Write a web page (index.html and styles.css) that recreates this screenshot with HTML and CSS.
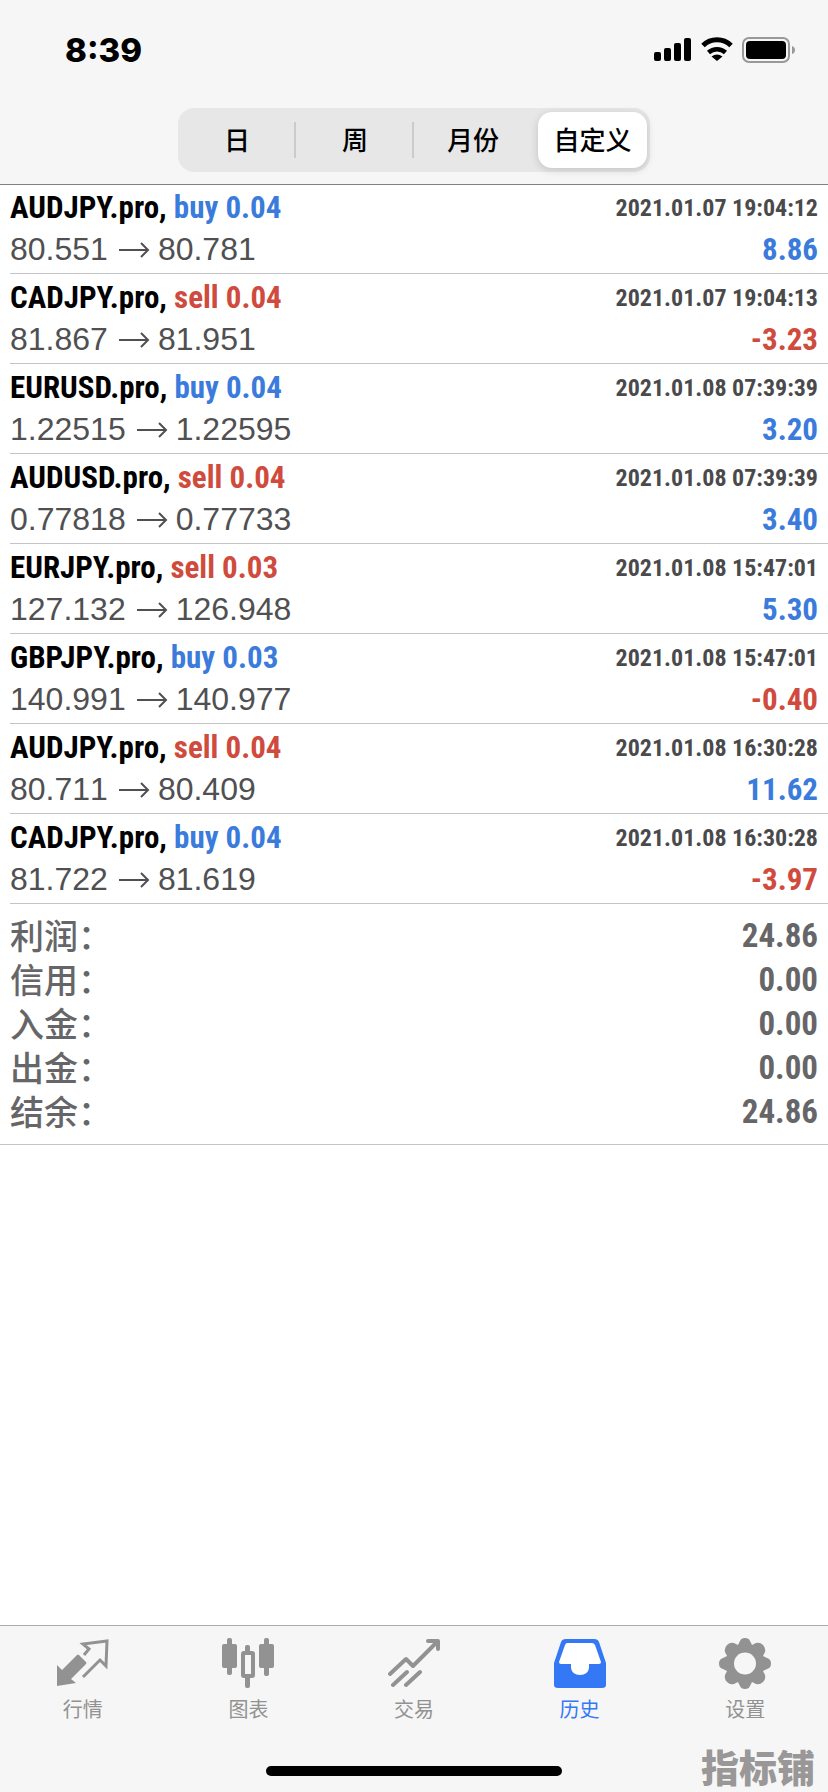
FILE: index.html
```html
<!DOCTYPE html>
<html lang="zh-CN">
<head>
<meta charset="utf-8">
<meta name="viewport" content="width=device-width, initial-scale=1">
<title>历史</title>
<link rel="stylesheet" href="styles.css">
</head>
<body>
<svg class="defs" width="0" height="0" aria-hidden="true">
  <symbol id="arrow" viewBox="0 0 32 20"><path d="M1 10H30M23 3L30 10L23 17" fill="none" stroke="currentColor" stroke-width="2"/></symbol>
</svg>
<header class="top">
  <div class="status">
    <time class="clock">8:39</time>
    <div class="status-icons">
      <svg width="38" height="26" viewBox="0 0 38 26" aria-hidden="true"><rect x="0" y="15" width="7" height="9" rx="2"/><rect x="10" y="11" width="7" height="13" rx="2"/><rect x="20" y="6" width="7" height="18" rx="2"/><rect x="30" y="1" width="7" height="23" rx="2"/></svg>
      <svg width="32" height="26" viewBox="0 0 32 26" aria-hidden="true"><path d="M2 8.500A20 20 0 0 1 30 8.500" fill="none" stroke="#000" stroke-width="5"/><path d="M7.500 15.500A12.500 12.500 0 0 1 24.500 15.500" fill="none" stroke="#000" stroke-width="4.500"/><path d="M16 24L10.500 19.500Q16 15.500 21.500 19.500Z"/></svg>
      <svg width="54" height="26" viewBox="0 0 54 26" aria-hidden="true"><rect x="1" y="1" width="46" height="24" rx="6" fill="none" stroke="#999" stroke-width="2"/><rect x="4" y="4" width="40" height="18" rx="4"/><path d="M50 9Q53 10 53 13Q53 16 50 17Z" fill="#999"/></svg>
    </div>
  </div>
  <div class="segments">
    <button type="button">日</button>
    <button type="button">周</button>
    <button type="button">月份</button>
    <button type="button" class="active" aria-pressed="true">自定义</button>
  </div>
</header>
<main>
  <ul class="deals">
    <li><div class="deal"><b>AUDJPY.pro, <span class="pos">buy 0.04</span></b><span class="price">80.551<svg class="arrow"><use href="#arrow"/></svg>80.781</span></div><div class="result"><time>2021.01.07 19:04:12</time><b class="pos">8.86</b></div></li>
    <li><div class="deal"><b>CADJPY.pro, <span class="neg">sell 0.04</span></b><span class="price">81.867<svg class="arrow"><use href="#arrow"/></svg>81.951</span></div><div class="result"><time>2021.01.07 19:04:13</time><b class="neg">-3.23</b></div></li>
    <li><div class="deal"><b>EURUSD.pro, <span class="pos">buy 0.04</span></b><span class="price">1.22515<svg class="arrow"><use href="#arrow"/></svg>1.22595</span></div><div class="result"><time>2021.01.08 07:39:39</time><b class="pos">3.20</b></div></li>
    <li><div class="deal"><b>AUDUSD.pro, <span class="neg">sell 0.04</span></b><span class="price">0.77818<svg class="arrow"><use href="#arrow"/></svg>0.77733</span></div><div class="result"><time>2021.01.08 07:39:39</time><b class="pos">3.40</b></div></li>
    <li><div class="deal"><b>EURJPY.pro, <span class="neg">sell 0.03</span></b><span class="price">127.132<svg class="arrow"><use href="#arrow"/></svg>126.948</span></div><div class="result"><time>2021.01.08 15:47:01</time><b class="pos">5.30</b></div></li>
    <li><div class="deal"><b>GBPJPY.pro, <span class="pos">buy 0.03</span></b><span class="price">140.991<svg class="arrow"><use href="#arrow"/></svg>140.977</span></div><div class="result"><time>2021.01.08 15:47:01</time><b class="neg">-0.40</b></div></li>
    <li><div class="deal"><b>AUDJPY.pro, <span class="neg">sell 0.04</span></b><span class="price">80.711<svg class="arrow"><use href="#arrow"/></svg>80.409</span></div><div class="result"><time>2021.01.08 16:30:28</time><b class="pos">11.62</b></div></li>
    <li><div class="deal"><b>CADJPY.pro, <span class="pos">buy 0.04</span></b><span class="price">81.722<svg class="arrow"><use href="#arrow"/></svg>81.619</span></div><div class="result"><time>2021.01.08 16:30:28</time><b class="neg">-3.97</b></div></li>
  </ul>
  <dl class="summary">
    <div><dt>利润：</dt><dd>24.86</dd></div>
    <div><dt>信用：</dt><dd>0.00</dd></div>
    <div><dt>入金：</dt><dd>0.00</dd></div>
    <div><dt>出金：</dt><dd>0.00</dd></div>
    <div><dt>结余：</dt><dd>24.86</dd></div>
  </dl>
</main>
<footer class="bottom">
  <nav class="tabs">
    <a href="#quotes"><svg viewBox="0 0 52 52" aria-hidden="true"><path d="M0 28L5 33L20 18Q21 17 22 18L29 25Q30 26 29 27L14 42L19 46L0 49Z" fill="currentColor"/><path d="M26 40L43 23L49 29L50 4L26 7L32 12L27 18" fill="none" stroke="currentColor" stroke-width="3"/></svg>行情</a>
    <a href="#charts"><svg viewBox="0 0 52 52" aria-hidden="true"><g fill="currentColor"><rect x="0" y="7" width="15" height="24" rx="2"/><rect x="5" y="1" width="5" height="37" rx="2"/><rect x="37" y="7" width="15" height="24" rx="2"/><rect x="42" y="1" width="5" height="38" rx="2"/><rect x="23" y="8" width="5" height="10" rx="2"/><rect x="23" y="39" width="5" height="12" rx="2"/></g><rect x="21" y="16" width="10" height="23" rx="1" fill="none" stroke="currentColor" stroke-width="4"/></svg>图表</a>
    <a href="#trade"><svg viewBox="0 0 52 52" aria-hidden="true"><g fill="none" stroke="currentColor" stroke-width="4" stroke-linecap="round" stroke-linejoin="round"><path d="M2 37L18 22L25 29L49 5M5 48L19 35M18 48L32 35"/><path d="M40 4H50V12"/></g></svg>交易</a>
    <a href="#history" class="active" aria-current="page"><svg viewBox="0 0 52 52" aria-hidden="true"><path d="M12 2H40Q44 2 45 5L52 26V48Q52 51 48 51H4Q0 51 0 48V26L7 5Q8 2 12 2Z" fill="currentColor"/><path d="M13 6H38Q40 6 41 8L47 25Q47 27 45 27H35V31Q34 38 26 38Q18 38 17 31V27H7Q5 27 5 25L11 8Q12 6 13 6Z" fill="#fff"/></svg>历史</a>
    <a href="#settings"><svg viewBox="0 0 52 52" aria-hidden="true"><path d="M21 4Q22 1 26 1Q30 1 31 4L33 8L37 6Q41 5 44 8Q47 11 46 15L44 19L48 21Q52 22 52 26.500Q52 31 48 32L44 34L46 38Q47 42 44 45Q41 48 37 47L33 45L31 49Q30 52 26 52Q22 52 21 49L19 45L15 47Q11 48 8 45Q5 42 6 38L8 34L4 32Q0 31 0 26.500Q0 22 4 21L8 19L6 15Q5 11 8 8Q11 5 15 6L19 8Z" fill="currentColor"/><circle cx="26" cy="26.500" r="11" fill="#f6f6f6"/></svg>设置</a>
  </nav>
  <div class="home-bar"></div>
  <span class="watermark">指标铺</span>
</footer>
</body>
</html>
```

FILE: styles.css
```css
* { box-sizing: border-box; }
body {
  margin: 0;
  min-height: 100vh;
  display: flex;
  flex-direction: column;
  background: #fff;
  color: #000;
  font-family: "Liberation Sans", "Noto Sans CJK SC", sans-serif;
}
.defs { position: absolute; }
.top {
  display: flex;
  flex-direction: column;
  align-items: center;
  background: #f6f6f6;
  border-bottom: 1px solid #808080;
  padding-bottom: 12px;
}
.status {
  align-self: stretch;
  display: flex;
  justify-content: space-between;
  align-items: center;
  height: 100px;
  padding: 0 32px 0 65px;
  margin-bottom: 8px;
}
.clock { font: 800 33px/40px Inter, sans-serif; }
.status-icons { display: flex; align-items: center; gap: 9px; }
.segments {
  display: grid;
  grid-template-columns: repeat(4, 1fr);
  width: 57%;
  height: 64px;
  background: #e7e7e8;
  border-radius: 16px;
  padding: 4px 0;
}
.segments button {
  border: 0;
  background: linear-gradient(#cbcbce, #cbcbce) right center / 2px 36px no-repeat;
  padding: 0 0 2px;
  color: #000;
  font: 500 26px/36px "Noto Sans CJK SC", sans-serif;
}
.segments button:nth-child(3) { background: none; }
.segments .active {
  background: #fff;
  border-radius: 14px;
  margin: 0 3px 0 6px;
  box-shadow: 0 2px 8px rgba(0, 0, 0, .16);
}
main { flex: 1; }
.deals { list-style: none; margin: -1px 0 0; padding: 0 0 0 10px; }
.deals li {
  display: flex;
  justify-content: space-between;
  height: 90px;
  padding: 3px 10px 0 0;
  border-bottom: 1px solid #c4c4c6;
}
.deal, .result { display: flex; flex-direction: column; }
.result { align-items: flex-end; }
.deals b, .deals time, .summary dd {
  font-family: "Roboto Condensed", Roboto, sans-serif;
  font-weight: 700;
}
.deals b { font-size: 31px; line-height: 42px; }
.deals time { font-size: 24px; line-height: 42px; color: #4a4a4c; }
.price {
  display: flex;
  align-items: center;
  font-size: 32px;
  line-height: 41px;
  font-kerning: none;
  color: #505052;
}
.arrow { width: 32px; height: 20px; margin: 0 8px 0 10px; }
.pos { color: #3a7bdc; }
.neg { color: #cf4b3e; }
.summary { margin: 0; padding: 9px 10px 11px; border-bottom: 1px solid #c4c4c6; color: #666668; }
.summary div { display: flex; justify-content: space-between; line-height: 44px; }
.summary dt { font: 500 34px/44px "Noto Sans CJK SC", sans-serif; }
.summary dd { margin: 0; font-size: 33px; line-height: 46px; height: 44px; }
.bottom {
  position: relative;
  height: 167px;
  background: #f6f6f6;
  border-top: 1px solid #a9aaaa;
  display: flex;
  flex-direction: column;
  align-items: center;
}
.tabs { display: grid; grid-template-columns: repeat(5, 1fr); align-self: stretch; padding-top: 11px; }
.tabs a {
  display: flex;
  flex-direction: column;
  align-items: center;
  gap: 5px;
  color: #929292;
  text-decoration: none;
  font: 400 20px/30px "Noto Sans CJK SC", sans-serif;
}
.tabs svg { width: 52px; height: 52px; }
.tabs .active { color: #3478f6; }
.home-bar { width: 296px; height: 10px; border-radius: 5px; background: #000; margin-top: 42px; }
.watermark {
  position: absolute;
  right: 13px;
  bottom: 6px;
  color: #999797;
  font: 900 38px/40px "Noto Sans CJK SC", sans-serif;
}
```
